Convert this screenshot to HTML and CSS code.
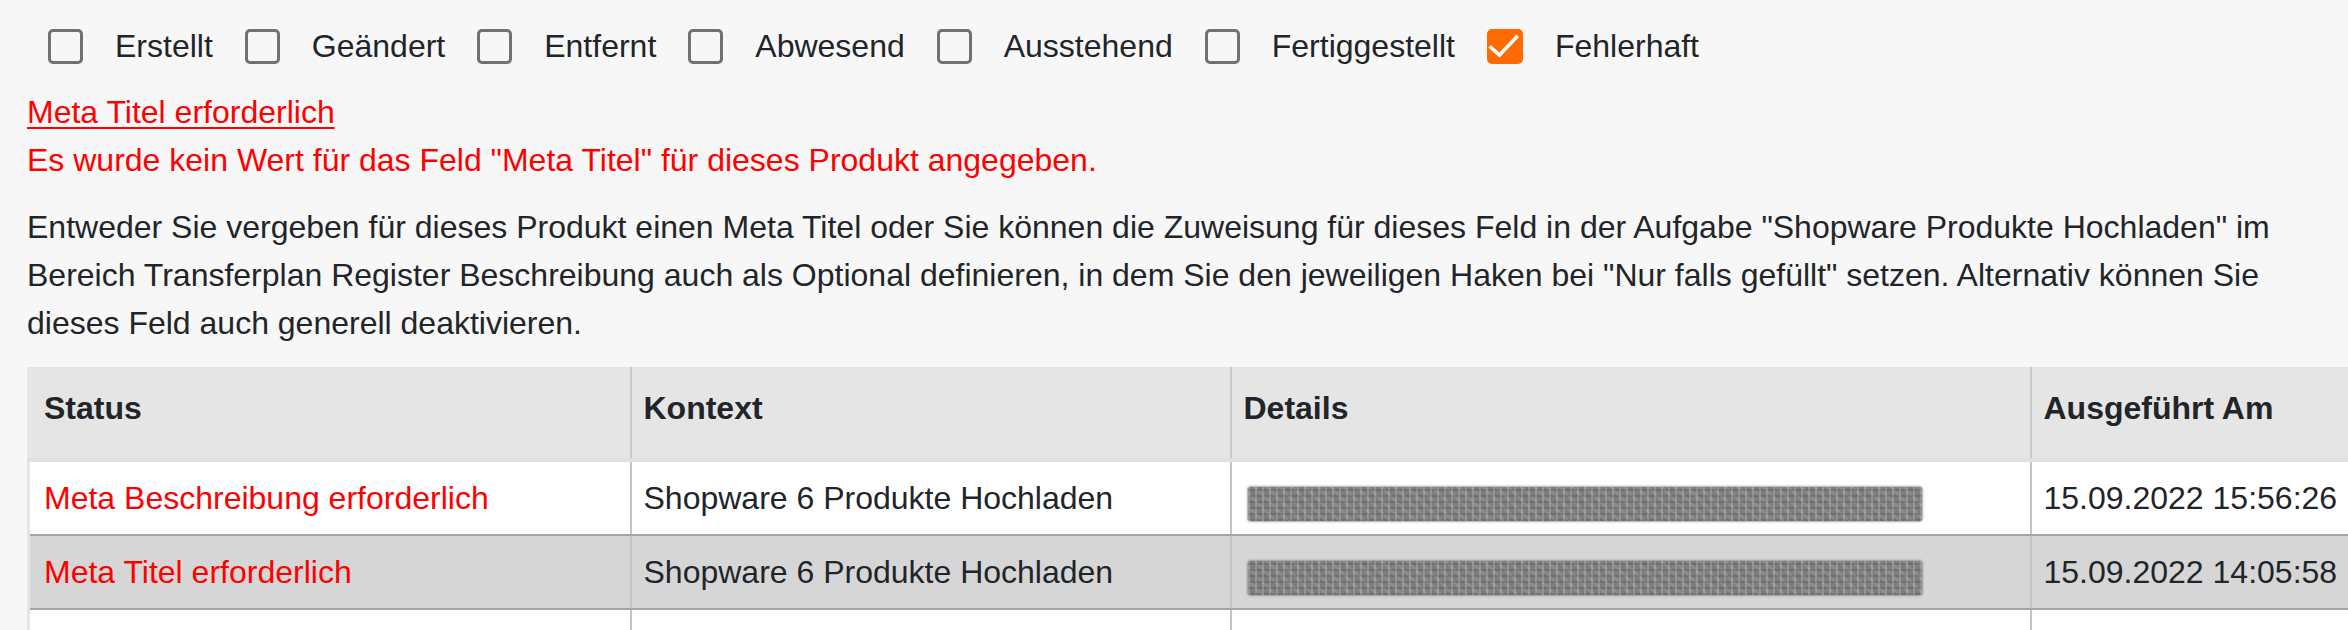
FILE: index.html
```html
<!DOCTYPE html>
<html lang="de">
<head>
<meta charset="utf-8">
<title>Fehlerprotokoll</title>
<link rel="stylesheet" href="styles.css">
</head>
<body>
<div class="page">
  <div class="filters">
    <label class="filter"><span class="box"></span><span class="label">Erstellt</span></label>
    <label class="filter"><span class="box"></span><span class="label">Geändert</span></label>
    <label class="filter"><span class="box"></span><span class="label">Entfernt</span></label>
    <label class="filter"><span class="box"></span><span class="label">Abwesend</span></label>
    <label class="filter"><span class="box"></span><span class="label">Ausstehend</span></label>
    <label class="filter"><span class="box"></span><span class="label">Fertiggestellt</span></label>
    <label class="filter"><span class="box checked"><svg class="check" viewBox="0 0 36 36" width="36" height="36"><path d="M5 19.5 L13.5 27 L30.5 9" fill="none" stroke="#ffffff" stroke-width="3.6" stroke-linecap="square" stroke-linejoin="miter"/></svg></span><span class="label">Fehlerhaft</span></label>
  </div>

  <a class="error-title" href="#">Meta Titel erforderlich</a>
  <div class="error-msg">Es wurde kein Wert für das Feld "Meta Titel" für dieses Produkt angegeben.</div>

  <p class="hint">Entweder Sie vergeben für dieses Produkt einen Meta Titel oder Sie können die Zuweisung für dieses Feld in der Aufgabe "Shopware Produkte Hochladen" im Bereich Transferplan Register Beschreibung auch als Optional definieren, in dem Sie den jeweiligen Haken bei "Nur falls gefüllt" setzen. Alternativ können Sie dieses Feld auch generell deaktivieren.</p>

  <table class="log">
    <colgroup>
      <col class="c-status">
      <col class="c-context">
      <col class="c-details">
      <col class="c-date">
    </colgroup>
    <thead>
      <tr>
        <th>Status</th>
        <th>Kontext</th>
        <th>Details</th>
        <th>Ausgeführt Am</th>
      </tr>
    </thead>
    <tbody>
      <tr>
        <td class="status">Meta Beschreibung erforderlich</td>
        <td>Shopware 6 Produkte Hochladen</td>
        <td><div class="redact"></div></td>
        <td>15.09.2022 15:56:26</td>
      </tr>
      <tr class="alt">
        <td class="status">Meta Titel erforderlich</td>
        <td>Shopware 6 Produkte Hochladen</td>
        <td><div class="redact"></div></td>
        <td>15.09.2022 14:05:58</td>
      </tr>
      <tr>
        <td class="status">&nbsp;</td>
        <td>&nbsp;</td>
        <td>&nbsp;</td>
        <td>&nbsp;</td>
      </tr>
    </tbody>
  </table>
</div>
</body>
</html>
```

FILE: styles.css
```css
html, body {
  margin: 0;
  padding: 0;
  overflow: hidden;
  background: #f7f7f7;
}

body {
  font-family: "Liberation Sans", Arial, Helvetica, sans-serif;
  font-size: 32px;
  line-height: 48px;
  color: #212529;
}

.page {
  padding: 0 27px;
}

.filters {
  display: flex;
  gap: 32px;
  margin-top: 22px;
  padding-left: 21px;
  height: 48px;
  align-items: center;
}

.filter {
  display: flex;
  align-items: center;
  gap: 32px;
  white-space: nowrap;
}

.box {
  display: block;
  width: 35px;
  height: 35px;
  box-sizing: border-box;
  border: 3.5px solid #717171;
  border-radius: 5px;
  background: transparent;
  position: relative;
}

.box.checked {
  width: 36px;
  background: #ff6b00;
  border-color: #ff6b00;
}

.check {
  position: absolute;
  left: -3.5px;
  top: -3.5px;
}

.error-title {
  display: block;
  margin-top: 18px;
  color: #ff0000;
  text-decoration: underline;
  text-decoration-thickness: 2px;
  text-underline-offset: 4px;
  width: max-content;
}

.error-msg {
  color: #ff0000;
}

.hint {
  margin: 19px 0 20px 0;
}

.log {
  border-collapse: collapse;
  table-layout: fixed;
  width: 2430px;
}

.c-status { width: 602px; }
.c-context { width: 600px; }
.c-details { width: 800px; }
.c-date { width: 428px; }

.log th {
  background: #e5e5e5;
  font-weight: bold;
  text-align: left;
  vertical-align: top;
  padding: 17px 12px 26px 12px;
  border-right: 2px solid #c9c9c9;
  border-bottom: 4px solid #dee2e6;
}

.log td {
  background: #ffffff;
  padding: 12px 12px 12px 12px;
  border-right: 2px solid #c4c4c4;
  border-bottom: 2px solid #a6a6a6;
  white-space: nowrap;
  overflow: hidden;
}

.log th:first-child,
.log td:first-child {
  border-left: 3px solid #e6e6e6;
  padding-left: 14px;
}

.log tr.alt td {
  background: #d6d6d6;
}

.status {
  color: #ff0000;
}

.redact {
  width: 674px;
  height: 34px;
  margin: 13px 0 1px 4px;
  border-radius: 3px;
  background-color: #7e7e7e;
  background-image:
    repeating-linear-gradient(90deg, rgba(255,255,255,0.18) 0 2px, transparent 2px 7px),
    repeating-linear-gradient(0deg, rgba(0,0,0,0.12) 0 2px, transparent 2px 6px),
    repeating-linear-gradient(45deg, rgba(255,255,255,0.10) 0 3px, transparent 3px 9px);
  box-shadow: 0 0 2px 1px rgba(110,110,110,0.6);
}
```
